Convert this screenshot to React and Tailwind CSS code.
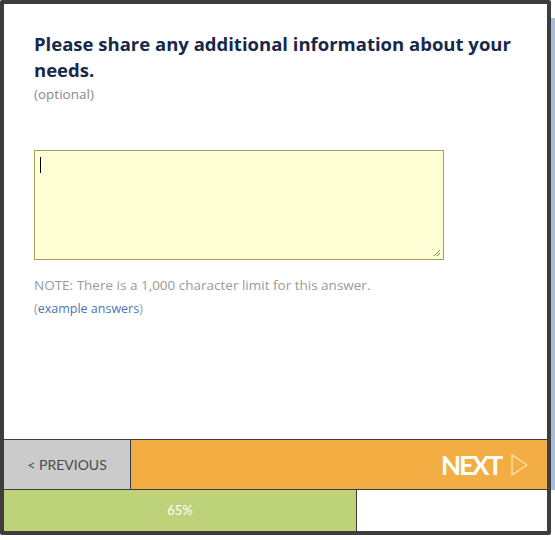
export default function App() {
  return (
    <div className="w-[555px] h-[540px] bg-white flex items-start" style={{ fontFamily: "Lato, 'Open Sans', sans-serif" }}>
      <div className="w-[551px] h-[535px] border-4 border-[#3d3d3d] rounded-[2px] flex flex-col bg-white">
        <div className="flex-1 pl-[30px] pt-[27px]">
          <h1 className="text-[18.5px] leading-[26px] font-bold text-[#17294a] w-[490px]" style={{ fontFamily: "'Open Sans', sans-serif" }}>
            Please share any additional information about your needs.
          </h1>
          <div className="text-[13.5px] leading-[18px] text-[#8a8a8a] mt-[2px]" style={{ fontFamily: "'Open Sans', sans-serif" }}>(optional)</div>
          <div className="mt-[47px] w-[410px] h-[110px] border border-[#a99b5b] bg-[#ffffd6] relative">
            <div className="absolute left-[5px] top-[6px] w-px h-[16px] bg-black"></div>
            <svg className="absolute right-[2px] bottom-[2px]" width="8" height="8" viewBox="0 0 8 8">
              <path d="M7 1 L1 7 M7 4 L4 7" stroke="#777" strokeWidth="1" />
            </svg>
          </div>
          <div className="mt-[16px] text-[13.5px] leading-[18px] text-[#9a9a9a]" style={{ fontFamily: "'Open Sans', sans-serif" }}>
            NOTE: There is a 1,000 character limit for this answer.
          </div>
          <div className="mt-[7px] text-[12.5px] leading-[16px] text-[#9a9a9a]" style={{ fontFamily: "'Open Sans', sans-serif" }}>
            (<span className="text-[#4a76b8]">example answers</span>)
          </div>
        </div>
        <div className="h-[51px] flex border-t border-b border-[#3d3d3d]">
          <div className="w-[127px] bg-[#cbcbcb] border-r border-[#3d3d3d] flex items-center justify-center text-[14px] text-[#4a4a4a]">
            &lt; PREVIOUS
          </div>
          <div className="flex-1 bg-[#f3ae43] flex items-center justify-end pr-[19px] gap-[10px]">
            <span className="text-[26px] leading-[26px] font-bold text-white tracking-[-2px]">NEXT</span>
            <svg width="17" height="22" viewBox="0 0 17 22">
              <path d="M1 1 L16 11 L1 21 Z" fill="none" stroke="#ffe6b0" strokeWidth="1.3" />
            </svg>
          </div>
        </div>
        <div className="h-[41px] flex">
          <div className="w-[65%] bg-[#bed27a] border-r border-[#3d3d3d] flex items-center justify-center text-[13px] text-white">
            65%
          </div>
          <div className="flex-1 bg-white"></div>
        </div>
      </div>
      <div className="w-[4px] h-[472px] mt-[18px] bg-[#a9bedb]"></div>
    </div>
  );
}
